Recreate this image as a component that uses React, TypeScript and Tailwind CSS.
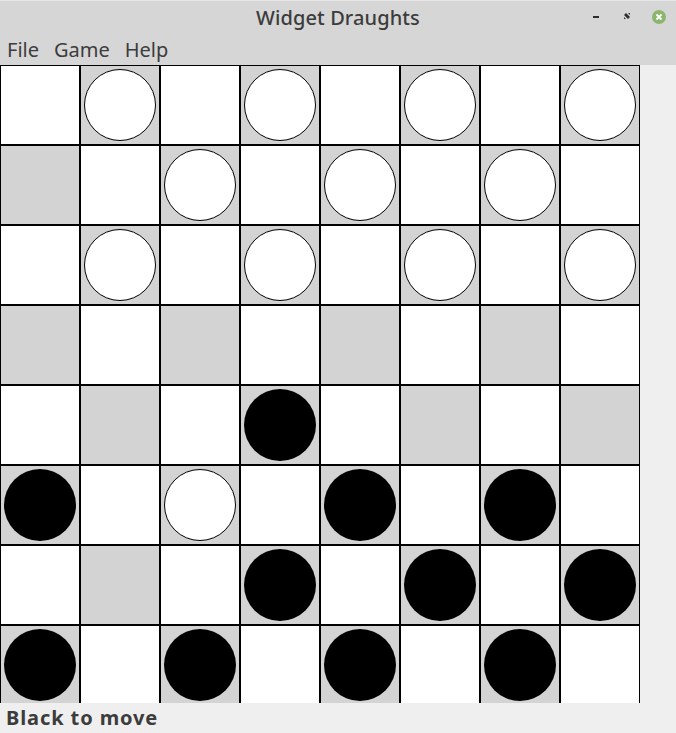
import React from "react";

const layout: string[] = [
  ".w.w.w.w",
  "..w.w.w.",
  ".w.w.w.w",
  "........",
  "...b....",
  "b.w.b.b.",
  "...b.b.b",
  "b.b.b.b.",
];

function Cell({ r, c }: { r: number; c: number }) {
  const dark = (r + c) % 2 === 1;
  const p = layout[r][c];
  return (
    <div
      className={
        "w-[80px] h-[80px] border border-black flex items-center justify-center " +
        (dark ? "bg-[#d3d3d3]" : "bg-white")
      }
    >
      {p === "w" && (
        <div className="w-[72px] h-[72px] rounded-full bg-white border border-black" />
      )}
      {p === "b" && <div className="w-[72px] h-[72px] rounded-full bg-black" />}
    </div>
  );
}

export default function App() {
  const font = { fontFamily: '"Noto Sans", "DejaVu Sans", sans-serif' };
  return (
    <div
      className="w-[676px] h-[733px] bg-[#efefef] flex flex-col overflow-hidden text-[#3c3c3c]"
      style={font}
    >
      <div className="h-[35px] bg-[#d6d6d6] border-t border-[#e6e6e6] relative flex items-center justify-center shrink-0">
        <span className="text-[20px] font-medium leading-none tracking-[0.1px]">Widget Draughts</span>
        <div className="absolute right-[9px] top-[8px] flex items-center gap-[15px]">
          <svg width="16" height="16" viewBox="0 0 16 16">
            <rect x="4" y="7" width="6" height="2" fill="#2e2e2e" />
          </svg>
          <svg width="16" height="16" viewBox="0 0 16 16">
            <path d="M4 6 L6 4 L10 8 L8 10 Z" fill="#2e2e2e" />
            <path d="M8 4 L10 4 L10 6 Z" fill="#2e2e2e" />
            <path d="M4 8 L4 10 L6 10 Z" fill="#2e2e2e" />
          </svg>
          <svg width="16" height="16" viewBox="0 0 16 16">
            <circle cx="8" cy="8" r="7" fill="#8cb66d" />
            <path d="M5.5 5.5 L10.5 10.5 M10.5 5.5 L5.5 10.5" stroke="#fff" strokeWidth="1.8" />
          </svg>
        </div>
      </div>
      <div className="h-[30px] bg-[#d6d6d6] flex items-center pl-[7px] gap-[15px] text-[20px] shrink-0">
        <span>File</span>
        <span>Game</span>
        <span>Help</span>
      </div>
      <div className="h-[638px] flex shrink-0 overflow-hidden">
        <div className="w-[640px] grid grid-cols-8 content-start">
          {layout.map((row, r) =>
            row.split("").map((_, c) => <Cell key={r + "-" + c} r={r} c={c} />)
          )}
        </div>
      </div>
      <div className="flex-1 flex items-center pl-[6px] text-[20px] font-bold tracking-[0.9px]">
        Black to move
      </div>
    </div>
  );
}
